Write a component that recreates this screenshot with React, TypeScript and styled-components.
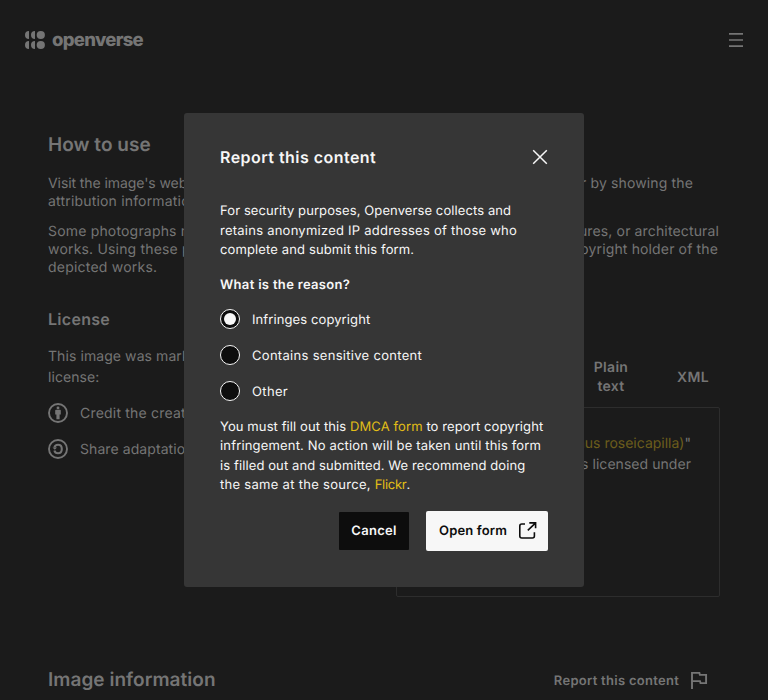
import React from "react";
import styled, { createGlobalStyle } from "styled-components";

const GlobalStyle = createGlobalStyle`
  *, *::before, *::after { box-sizing: border-box; }
  body {
    margin: 0;
    background: #1b1b1b;
    color: #757575;
    font-family: Inter, "Liberation Sans", sans-serif;
    font-size: 14px;
    text-rendering: geometricPrecision;
    overflow: hidden;
  }
  h1, h2, h3, p, ul, fieldset { margin: 0; padding: 0; border: 0; }
  button { font-family: inherit; text-rendering: inherit; border: 0; padding: 0; cursor: pointer; }
`;

const Page = styled.div`
  height: 700px;
  overflow: hidden;
`;

const Header = styled.header`
  height: 80px;
  padding: 0 24px 0 25px;
  display: flex;
  align-items: center;
  justify-content: space-between;
`;

const Brand = styled.div`
  display: flex;
  align-items: center;
  gap: 7px;
  height: 20px;
`;

const Wordmark = styled.span`
  font-size: 18.5px;
  line-height: 20px;
  font-weight: 850;
  letter-spacing: -0.72px;
  margin-top: -1px;
`;

const IconButton = styled.button`
  display: grid;
  place-items: center;
  width: 16px;
  height: 16px;
  background: none;
  color: inherit;
`;

const Main = styled.main`
  padding: 53px 48px 0;
`;

const Heading = styled.h2`
  font-size: 19px;
  line-height: 24px;
  font-weight: 600;
  letter-spacing: 0.04px;
`;

/* A single line of text with its own tracking. */
const Line = styled.span<{ $tracking?: number }>`
  display: block;
  white-space: nowrap;
  letter-spacing: ${(p) => p.$tracking ?? 0}px;
`;

const Paragraph = styled.p`
  line-height: 18px;
  margin-top: 12px;
`;

const WideLine = styled.span<{ $width: number; $tracking?: number }>`
  display: flex;
  width: ${(p) => p.$width}px;
  white-space: pre;
  letter-spacing: 0.14px;
  > :first-child { letter-spacing: ${(p) => p.$tracking ?? 0.18}px; }
`;

const Middle = styled.span`
  flex: 1;
  min-width: 0;
  overflow: hidden;
`;

const Intro = styled.section`
  ${Heading} + ${Paragraph} { margin-top: 18px; }
`;

const Columns = styled.div`
  display: grid;
  grid-template-columns: 324px 324px;
  gap: 24px;
  margin-top: 31px;
`;

const SubHeading = styled.h3`
  font-size: 16px;
  line-height: 22px;
  font-weight: 600;
  letter-spacing: 0.28px;
`;

const LicenseText = styled.p`
  line-height: 21px;
  margin-top: 16px;
`;

const Terms = styled.ul`
  list-style: none;
  display: grid;
  gap: 12px;
  margin-top: 13px;
`;

const Term = styled.li`
  display: flex;
  align-items: center;
  gap: 12px;
  height: 24px;
  line-height: 18px;
  svg { flex: none; }
  ${Line} { margin-top: 1px; }
`;

const Tabs = styled.div`
  display: flex;
  justify-content: flex-end;
  margin-top: 22px;
  height: 54px;
`;

const Tab = styled.div<{ $width: number }>`
  width: ${(p) => p.$width}px;
  display: flex;
  align-items: center;
  justify-content: center;
  text-align: center;
  font-weight: 600;
  line-height: 19px;
  letter-spacing: 0.3px;
  padding: 0 10px 4px;
`;

const Attribution = styled.div`
  height: 190px;
  margin-top: 1px;
  border: 1px solid #2d2d2d;
  border-radius: 2px;
  padding: 25px 28px;
  line-height: 21px;
  text-align: right;
`;

const Highlight = styled.span`
  color: #6c5d1c;
`;

const InfoBar = styled.div`
  display: flex;
  justify-content: space-between;
  align-items: center;
  height: 40px;
  margin-top: 63px;
  ${Heading} { margin-top: -1px; }
`;

const ReportLink = styled.div`
  display: flex;
  align-items: center;
  gap: 8px;
  padding-right: 9px;
  font-size: 13px;
  font-weight: 600;
  ${Line} { padding-top: 2px; }
`;

const Overlay = styled.div`
  position: fixed;
  inset: 0;
  display: grid;
  place-items: center;
`;

const Dialog = styled.div`
  width: 400px;
  height: 474px;
  padding: 28px 36px 36px;
  border-radius: 3px;
  background: #363636;
  color: #f7f7f7;
  font-size: 13px;
  line-height: 19.5px;
`;

const DialogHeader = styled.div`
  display: flex;
  align-items: center;
  justify-content: space-between;
  height: 32px;
`;

const DialogTitle = styled.h1`
  font-size: 16px;
  line-height: 24px;
  font-weight: 600;
  letter-spacing: 0.46px;
`;

const DialogText = styled.p<{ $top: number }>`
  margin-top: ${(p) => p.$top}px;
`;

const Question = styled.p`
  margin-top: 15px;
  font-weight: 600;
  letter-spacing: 0.32px;
`;

const Options = styled.fieldset`
  display: grid;
  gap: 16px;
  margin-top: 14px;
`;

const Option = styled.label`
  display: flex;
  align-items: center;
  gap: 12px;
  height: 20px;
  ${Line} { line-height: 20px; padding-top: 1px; }
`;

const Radio = styled.span<{ $checked?: boolean }>`
  display: grid;
  place-items: center;
  width: 20px;
  height: 20px;
  border: 1px solid #f7f7f7;
  border-radius: 50%;
  background: #0d0d0d;
  &::after {
    content: "";
    width: 12px;
    height: 12px;
    border-radius: 50%;
    background: ${(p) => (p.$checked ? "#f7f7f7" : "transparent")};
  }
`;

const Link = styled.a<{ $tracking?: number }>`
  color: #e2be17;
  letter-spacing: ${(p) => (p.$tracking === undefined ? "inherit" : `${p.$tracking}px`)};
`;

const Actions = styled.div`
  display: flex;
  justify-content: flex-end;
  align-items: center;
  gap: 17px;
  margin-top: 15.5px;
`;

const Button = styled.button<{ $primary?: boolean }>`
  display: flex;
  align-items: center;
  justify-content: ${(p) => (p.$primary ? "space-between" : "center")};
  width: ${(p) => (p.$primary ? 122 : 70)}px;
  height: ${(p) => (p.$primary ? 40 : 38)}px;
  padding: ${(p) => (p.$primary ? "0 8px 0 13px" : "0")};
  border-radius: ${(p) => (p.$primary ? 2 : 1)}px;
  background: ${(p) => (p.$primary ? "#f7f7f7" : "#0d0d0d")};
  color: ${(p) => (p.$primary ? "#0d0d0d" : "#f7f7f7")};
  font-size: 13px;
  font-weight: 600;
`;

const LogoMark = () => (
  <svg width="20" height="20" viewBox="0 0 20 20" fill="currentColor">
    {[5, 15].map((y) => (
      <g key={y}>
        <path d={`M4 ${y - 4}v8a4 4 0 0 1 0-8zM10 ${y - 4}v8a4 4 0 0 1 0-8z`} />
        <circle cx="15.8" cy={y} r="4.1" />
      </g>
    ))}
  </svg>
);

const MenuIcon = () => (
  <svg width="16" height="16" fill="none" stroke="currentColor" strokeWidth="1.6">
    <path d="M1 1.9h14M1 8h14M1 14.1h14" />
  </svg>
);

const CloseIcon = () => (
  <svg width="16" height="16" fill="none" stroke="currentColor" strokeWidth="1.5">
    <path d="M1.2 1.2l13.6 13.6M14.8 1.2L1.2 14.8" />
  </svg>
);

const AttributionIcon = () => (
  <svg width="20" height="20" fill="currentColor">
    <circle cx="10" cy="10" r="9" fill="none" stroke="currentColor" strokeWidth="1.9" />
    <circle cx="10" cy="4.9" r="1.45" />
    <path d="M8 6.8h4q.8 0 .8.8v4h-1.2v4.7H8.4v-4.7H7.2v-4q0-.8.8-.8z" />
  </svg>
);

const ShareAlikeIcon = () => (
  <svg width="20" height="20" fill="none" stroke="currentColor">
    <circle cx="10" cy="10" r="9" strokeWidth="1.9" />
    <path d="M6.4 8.5C6.8 6.6 8.2 5.7 10 5.7c2.3 0 3.8 1.8 3.8 4.3s-1.5 4.3-3.8 4.3c-1.8 0-3.2-.9-3.6-2.7" strokeWidth="2.1" />
    <path d="M4.5 8.5h4.6L6.8 10.8z" fill="currentColor" stroke="none" />
  </svg>
);

const ExternalIcon = () => (
  <svg width="24" height="24" fill="none" stroke="currentColor" strokeWidth="1.6">
    <path d="M9 5H5.8q-2 0-2 2v10q0 2 2 2h10.6q2 0 2-2v-3.7M13.3 3.9h6.3V9.2M19.4 4.1l-7.6 7.3" />
  </svg>
);

const FlagIcon = () => (
  <svg width="24" height="24" fill="none" stroke="currentColor" strokeWidth="1.9">
    <path d="M5 21V4.9h7.4l.5 2h6.2v8.2h-5.6l-.5-2H5" />
  </svg>
);

export default function App() {
  return (
    <Page>
      <GlobalStyle />
      <Header>
        <Brand>
          <LogoMark />
          <Wordmark>openverse</Wordmark>
        </Brand>
        <IconButton aria-label="Menu"><MenuIcon /></IconButton>
      </Header>
      <Main>
        <Intro>
          <Heading>How to use</Heading>
          <Paragraph>
            <WideLine $width={645} $tracking={-0.08}>
              <span>Visit the image's website </span>
              <Middle>to download and use it. Make sure to credit</Middle>
              <span> the creator by showing the</span>
            </WideLine>
            <Line $tracking={0.18}>attribution information where you are sharing your work.</Line>
          </Paragraph>
          <Paragraph>
            <WideLine $width={671}>
              <span>Some photographs might </span>
              <Middle>contain copyrighted content, such as</Middle>
              <span> paintings, sculptures, or architectural</span>
            </WideLine>
            <WideLine $width={670}>
              <span>works. Using these photographs </span>
              <Middle>may require more permissions</Middle>
              <span> from the copyright holder of the</span>
            </WideLine>
            <Line $tracking={0.22}>depicted works.</Line>
          </Paragraph>
        </Intro>
        <Columns>
          <div>
            <SubHeading>License</SubHeading>
            <LicenseText>
              <Line $tracking={0.08}>This image was marked with a CC BY-SA 2.0</Line>
              <Line $tracking={0.08}>license:</Line>
            </LicenseText>
            <Terms>
              <Term><AttributionIcon /><Line $tracking={0.2}>Credit the creator.</Line></Term>
              <Term><ShareAlikeIcon /><Line $tracking={0.08}>Share adaptations under the same terms.</Line></Term>
            </Terms>
          </div>
          <div>
            <SubHeading>Credit the creator</SubHeading>
            <Tabs>
              <Tab $width={72}>Rich text</Tab>
              <Tab $width={64}>HTML</Tab>
              <Tab $width={110}>Plain<br />text</Tab>
              <Tab $width={54}>XML</Tab>
            </Tabs>
            <Attribution>
              <Line>
                <Highlight>Galah (Eolophus roseicapilla)</Highlight>"
              </Line>
              <Line $tracking={0.05}>by the photographer is licensed under</Line>
            </Attribution>
          </div>
        </Columns>
        <InfoBar>
          <Heading>Image information</Heading>
          <ReportLink><Line $tracking={0.28}>Report this content</Line><FlagIcon /></ReportLink>
        </InfoBar>
      </Main>
      <Overlay>
        <Dialog role="dialog" aria-modal="true">
          <DialogHeader>
            <DialogTitle>Report this content</DialogTitle>
            <IconButton aria-label="Close"><CloseIcon /></IconButton>
          </DialogHeader>
          <DialogText $top={29}>
            <Line $tracking={0.1}>For security purposes, Openverse collects and</Line>
            <Line $tracking={0.24}>retains anonymized IP addresses of those who</Line>
            <Line $tracking={0.13}>complete and submit this form.</Line>
          </DialogText>
          <Question>What is the reason?</Question>
          <Options>
            <Option><Radio $checked /><Line $tracking={0.1}>Infringes copyright</Line></Option>
            <Option><Radio /><Line $tracking={0.3}>Contains sensitive content</Line></Option>
            <Option><Radio /><Line $tracking={0.35}>Other</Line></Option>
          </Options>
          <DialogText $top={16.5}>
            <Line $tracking={0.1}>You must fill out this <Link>DMCA form</Link> to report copyright</Line>
            <Line $tracking={0.17}>infringement. No action will be taken until this form</Line>
            <Line $tracking={0.11}>is filled out and submitted. We recommend doing</Line>
            <Line $tracking={0.29}>the same at the source, <Link $tracking={-0.3}>Flickr</Link>.</Line>
          </DialogText>
          <Actions>
            <Button><Line $tracking={0.3}>Cancel</Line></Button>
            <Button $primary><Line $tracking={0.16}>Open form</Line><ExternalIcon /></Button>
          </Actions>
        </Dialog>
      </Overlay>
    </Page>
  );
}
